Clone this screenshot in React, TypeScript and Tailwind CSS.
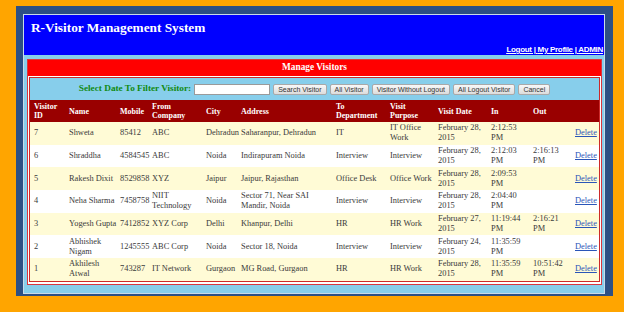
const serif = { fontFamily: '"Liberation Serif", "Times New Roman", serif' };

type Row = string[][];

const headers: string[][] = [
  ['Visitor', 'ID'],
  ['Name'],
  ['Mobile'],
  ['From', 'Company'],
  ['City'],
  ['Address'],
  ['To', 'Department'],
  ['Visit', 'Purpose'],
  ['Visit Date'],
  ['In'],
  ['Out'],
  [],
];

const rows: Row[] = [
  [['7'], ['Shweta'], ['85412'], ['ABC'], ['Dehradun'], ['Saharanpur, Dehradun'], ['IT'], ['IT Office', 'Work'], ['February 28,', '2015'], ['2:12:53', 'PM'], []],
  [['6'], ['Shraddha'], ['4584545'], ['ABC'], ['Noida'], ['Indirapuram Noida'], ['Interview'], ['Interview'], ['February 28,', '2015'], ['2:12:03', 'PM'], ['2:16:13', 'PM']],
  [['5'], ['Rakesh Dixit'], ['8529858'], ['XYZ'], ['Jaipur'], ['Jaipur, Rajasthan'], ['Office Desk'], ['Office Work'], ['February 28,', '2015'], ['2:09:53', 'PM'], []],
  [['4'], ['Neha Sharma'], ['7458758'], ['NIIT', 'Technology'], ['Noida'], ['Sector 71, Near SAI', 'Mandir, Noida'], ['Interview'], ['Interview'], ['February 28,', '2015'], ['2:04:40', 'PM'], []],
  [['3'], ['Yogesh Gupta'], ['7412852'], ['XYZ Corp'], ['Delhi'], ['Khanpur, Delhi'], ['HR'], ['HR Work'], ['February 27,', '2015'], ['11:19:44', 'PM'], ['2:16:21', 'PM']],
  [['2'], ['Abhishek', 'Nigam'], ['1245555'], ['ABC Corp'], ['Noida'], ['Sector 18, Noida'], ['Interview'], ['Interview'], ['February 24,', '2015'], ['11:35:59', 'PM'], []],
  [['1'], ['Akhilesh', 'Atwal'], ['743287'], ['IT Network'], ['Gurgaon'], ['MG Road, Gurgaon'], ['HR'], ['HR Work'], ['February 28,', '2015'], ['11:35:59', 'PM'], ['10:51:42', 'PM']],
];

const widths = [35, 51, 32, 54, 35, 95, 54, 48, 53, 42, 42, 28];

function Lines({ lines }: { lines: string[] }) {
  return (
    <>
      {lines.map((l, i) => (
        <span key={i}>
          {i > 0 && <br />}
          {l}
        </span>
      ))}
    </>
  );
}

function Btn({ children }: { children: React.ReactNode }) {
  return (
    <button
      type="button"
      className="h-[11px] px-[4px] border border-[#a9a9a9] rounded-[2px] bg-gradient-to-b from-[#f8f8f8] to-[#dcdcdc] text-[7px] leading-[9px] text-[#333] whitespace-nowrap"
      style={{ fontFamily: '"Liberation Sans", Arial, sans-serif' }}
    >
      {children}
    </button>
  );
}

export default function App() {
  return (
    <div className="w-[624px] h-[312px] bg-[#FFA500] pt-[6px] pl-[16px] overflow-hidden">
      <div className="w-[597px] h-[290px] bg-[#2d5084] pt-[8px] pl-[7px]">
        <div className="w-[582px] h-[280px] border border-[#c9dbe9] flex flex-col">
          {/* header */}
          <div className="h-[40px] bg-[#0000FF] flex flex-col justify-between pl-[7px] pr-[1px] pt-[5px] pb-[1px]">
            <h1 className="text-[13.3px] leading-[15px] font-bold text-white" style={serif}>
              R-Visitor Management System
            </h1>
            <div
              className="self-end text-[8px] leading-[9px] font-bold text-white underline tracking-[-0.3px]"
              style={{ fontFamily: '"Liberation Sans", Arial, sans-serif' }}
            >
              <a>Logout</a> | <a>My Profile</a> | <a>ADMIN</a>
            </div>
          </div>

          {/* body */}
          <div className="h-[238px] bg-[#87CEEB] pt-[4px] pl-[3px] pr-[2px]">
            <div className="w-[575px] border border-[#d9363e] bg-white" style={serif}>
              <div className="h-[16px] bg-[#FF0000] text-white font-bold text-[9.3px] flex items-center justify-center">
                Manage Visitors
              </div>
              <div className="px-[1px] pt-[1px] pb-[2px] bg-white">
                <div className="border border-[#cc2a2a]">
                  {/* filter */}
                  <div className="h-[22px] bg-[#87CEEB] flex items-center justify-center gap-[3px]">
                    <span className="text-[9.25px] font-bold text-[#118a11] whitespace-nowrap">
                      Select Date To Filter Visitor:
                    </span>
                    <input
                      className="w-[76px] h-[11px] bg-white border border-[#9a9a9a] outline-none"
                      readOnly
                    />
                    <Btn>Search Visitor</Btn>
                    <Btn>All Visitor</Btn>
                    <Btn>Visitor Without Logout</Btn>
                    <Btn>All Logout Visitor</Btn>
                    <Btn>Cancel</Btn>
                  </div>

                  {/* grid */}
                  <table className="w-[569px] table-fixed">
                    <colgroup>
                      {widths.map((w, i) => (
                        <col key={i} style={{ width: w }} />
                      ))}
                    </colgroup>
                    <thead>
                      <tr className="h-[22px] bg-[#990000]">
                        {headers.map((h, i) => (
                          <th
                            key={i}
                            className="pl-[4px] text-left align-middle text-white font-bold text-[8px] leading-[9px] whitespace-nowrap"
                          >
                            <Lines lines={h} />
                          </th>
                        ))}
                      </tr>
                    </thead>
                    <tbody>
                      {rows.map((r, ri) => (
                        <tr key={ri} className={ri % 2 === 0 ? 'h-[22.7px] bg-[#FFFBD6]' : 'h-[22.7px] bg-white'}>
                          {r.map((c, ci) => (
                            <td
                              key={ci}
                              className="pl-[4px] align-middle text-[8.4px] leading-[10px] text-[#3a3a3a] whitespace-nowrap"
                            >
                              <Lines lines={c} />
                            </td>
                          ))}
                          <td className="pl-[4px] align-middle text-[8.4px] leading-[10px] whitespace-nowrap">
                            <a className="text-[#2a55b8] underline">Delete</a>
                          </td>
                        </tr>
                      ))}
                    </tbody>
                  </table>
                </div>
              </div>
            </div>
          </div>
        </div>
      </div>
    </div>
  );
}
